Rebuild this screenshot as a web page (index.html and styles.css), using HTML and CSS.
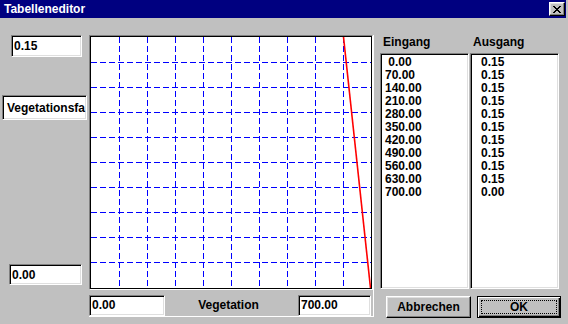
FILE: index.html
```html
<!DOCTYPE html>
<html lang="de">
<head>
    <meta charset="UTF-8">
    <meta name="viewport" content="width=device-width, initial-scale=1.0">
    <title>Tabelleneditor</title>
    <link rel="stylesheet" href="styles.css">
</head>
<body>
    <div class="window">
        <div class="titlebar">
            <span class="title">Tabelleneditor</span>
            <button class="close-btn" title="Schließen">
                <svg width="8" height="7" viewBox="0 0 8 7">
                    <path d="M0 0h2v1h-2z M6 0h2v1h-2z M1 1h2v1h-2z M5 1h2v1h-2z M2 2h4v1h-4z M3 3h2v1h-2z M2 4h4v1h-4z M1 5h2v1h-2z M5 5h2v1h-2z M0 6h2v1h-2z M6 6h2v1h-2z" fill="#000"/>
                </svg>
            </button>
        </div>

        <div class="dialog">
            <!-- Y-Achse -->
            <div class="axis-col">
                <div class="field field-max">0.15</div>
                <div class="field field-name">Vegetationsfa</div>
                <div class="field field-min">0.00</div>
            </div>

            <!-- Diagramm -->
            <div class="plot">
                <div class="chart">
                    <div class="chart-inner">
                        <svg class="grid" width="280" height="251" viewBox="0 0 280 251">
                            <g stroke="#0000ff" stroke-width="1" stroke-dasharray="6 3" shape-rendering="crispEdges">
                                <line x1="28.5" y1="0" x2="28.5" y2="251"/>
                                <line x1="56.5" y1="0" x2="56.5" y2="251"/>
                                <line x1="84.5" y1="0" x2="84.5" y2="251"/>
                                <line x1="112.5" y1="0" x2="112.5" y2="251"/>
                                <line x1="140.5" y1="0" x2="140.5" y2="251"/>
                                <line x1="168.5" y1="0" x2="168.5" y2="251"/>
                                <line x1="196.5" y1="0" x2="196.5" y2="251"/>
                                <line x1="224.5" y1="0" x2="224.5" y2="251"/>
                                <line x1="252.5" y1="0" x2="252.5" y2="251"/>
                                <line x1="0" y1="25.5" x2="280" y2="25.5"/>
                                <line x1="0" y1="50.5" x2="280" y2="50.5"/>
                                <line x1="0" y1="75.5" x2="280" y2="75.5"/>
                                <line x1="0" y1="100.5" x2="280" y2="100.5"/>
                                <line x1="0" y1="125.5" x2="280" y2="125.5"/>
                                <line x1="0" y1="150.5" x2="280" y2="150.5"/>
                                <line x1="0" y1="175.5" x2="280" y2="175.5"/>
                                <line x1="0" y1="200.5" x2="280" y2="200.5"/>
                                <line x1="0" y1="225.5" x2="280" y2="225.5"/>
                            </g>
                            <line x1="252.5" y1="0" x2="279.5" y2="251" stroke="#ff0000" stroke-width="1.6"/>
                        </svg>
                    </div>
                </div>
                <div class="x-axis">
                    <div class="field field-xmin">0.00</div>
                    <span class="x-label">Vegetation</span>
                    <div class="field field-xmax">700.00</div>
                </div>
            </div>

            <!-- Tabelle -->
            <div class="table-col">
                <div class="lists">
                    <div class="list-group">
                        <div class="list-label">Eingang</div>
                        <div class="listbox">
                            <div class="list-item">&nbsp;0.00</div>
                            <div class="list-item">70.00</div>
                            <div class="list-item">140.00</div>
                            <div class="list-item">210.00</div>
                            <div class="list-item">280.00</div>
                            <div class="list-item">350.00</div>
                            <div class="list-item">420.00</div>
                            <div class="list-item">490.00</div>
                            <div class="list-item">560.00</div>
                            <div class="list-item">630.00</div>
                            <div class="list-item">700.00</div>
                        </div>
                    </div>
                    <div class="list-group">
                        <div class="list-label">Ausgang</div>
                        <div class="listbox listbox-out">
                            <div class="list-item">0.15</div>
                            <div class="list-item">0.15</div>
                            <div class="list-item">0.15</div>
                            <div class="list-item">0.15</div>
                            <div class="list-item">0.15</div>
                            <div class="list-item">0.15</div>
                            <div class="list-item">0.15</div>
                            <div class="list-item">0.15</div>
                            <div class="list-item">0.15</div>
                            <div class="list-item">0.15</div>
                            <div class="list-item">0.00</div>
                        </div>
                    </div>
                </div>
                <div class="buttons">
                    <button class="btn">Abbrechen</button>
                    <button class="btn btn-default"><span class="focus">OK</span></button>
                </div>
            </div>
        </div>
    </div>
</body>
</html>
```

FILE: styles.css
```css
body {
    margin: 0;
    padding: 0;
    font-family: 'Liberation Sans', Arial, sans-serif;
    font-size: 12px;
    font-weight: bold;
    color: #000;
}

.window {
    width: 568px;
    height: 324px;
    background-color: #c0c0c0;
    overflow: hidden;
}

.titlebar {
    height: 18px;
    margin-right: 2px;
    padding: 0 1px 0 4px;
    background-color: #000080;
    display: flex;
    align-items: center;
    justify-content: space-between;
}

.title {
    color: #fff;
    line-height: 18px;
}

.close-btn {
    width: 16px;
    height: 14px;
    padding: 0;
    background-color: #c0c0c0;
    border: 1px solid;
    border-color: #fff #000 #000 #fff;
    box-shadow: inset -1px -1px #808080, inset 1px 1px #dfdfdf;
    display: flex;
    align-items: center;
    justify-content: center;
}

.close-btn svg {
    display: block;
}

.dialog {
    height: 306px;
    display: flex;
}

/* Eingabefelder, vertieft */
.field {
    box-sizing: border-box;
    background-color: #fff;
    border: 1px solid;
    border-color: #808080 #fff #fff #808080;
    box-shadow: inset 1px 1px #000, inset -1px -1px #dfdfdf;
    padding-left: 2px;
    display: flex;
    align-items: center;
    white-space: nowrap;
    overflow: hidden;
}

.axis-col {
    width: 89px;
    display: flex;
    flex-direction: column;
    align-items: flex-start;
}

.field-max {
    margin: 17px 0 0 11px;
    width: 71px;
    height: 22px;
}

.field-name {
    margin: 38px 0 0 2px;
    width: 85px;
    height: 25px;
    padding-left: 4px;
}

.field-min {
    margin: auto 0 39px 9px;
    width: 73px;
    height: 21px;
}

.plot {
    width: 284px;
    height: 281px;
    margin-top: 17px;
    border-right: 1px solid #fff;
    border-bottom: 1px solid #fff;
}

.chart {
    border: 1px solid;
    border-color: #808080 #fff #fff #808080;
}

.chart-inner {
    border: 1px solid #000;
    background-color: #fff;
    height: 251px;
}

.grid {
    display: block;
}

.x-axis {
    margin-top: 4px;
    height: 22px;
    padding-right: 2px;
    display: flex;
    align-items: center;
}

.field-xmin {
    width: 76px;
    height: 21px;
}

.x-label {
    flex: 1;
    text-align: center;
    padding-right: 6px;
}

.field-xmax {
    width: 73px;
    height: 21px;
}

.table-col {
    padding-left: 6px;
    display: flex;
    flex-direction: column;
}

.lists {
    display: flex;
    gap: 1px;
}

.list-group {
    width: 89px;
}

.list-label {
    margin-top: 17px;
    height: 18px;
    line-height: 15px;
    padding-left: 3px;
}

.listbox {
    box-sizing: border-box;
    height: 236px;
    background-color: #fff;
    border: 1px solid;
    border-color: #808080 #fff #fff #808080;
    box-shadow: inset 1px 1px #000, inset -1px -1px #dfdfdf;
    padding: 2px 2px 0 4px;
}

.listbox-out {
    padding-left: 10px;
}

.list-item {
    line-height: 13px;
    height: 13px;
    white-space: nowrap;
}

.buttons {
    margin: 7px 0 0 6px;
    display: flex;
    gap: 6px;
}

.btn {
    box-sizing: border-box;
    width: 85px;
    height: 22px;
    padding: 0;
    font-family: 'Liberation Sans', Arial, sans-serif;
    font-size: 12px;
    font-weight: bold;
    color: #000;
    background-color: #c0c0c0;
    border: 1px solid;
    border-color: #fff #000 #000 #fff;
    box-shadow: inset -1px -1px #808080, inset 1px 1px #dfdfdf;
}

.btn-default {
    width: 84px;
    border: 1px solid #000;
    box-shadow: inset 1px 1px #fff, inset -1px -1px #000, inset -2px -2px #808080;
    padding: 3px;
}

.btn-default .focus {
    display: block;
    height: 100%;
    box-sizing: border-box;
    border: 1px dotted #000;
    line-height: 12px;
}
```
